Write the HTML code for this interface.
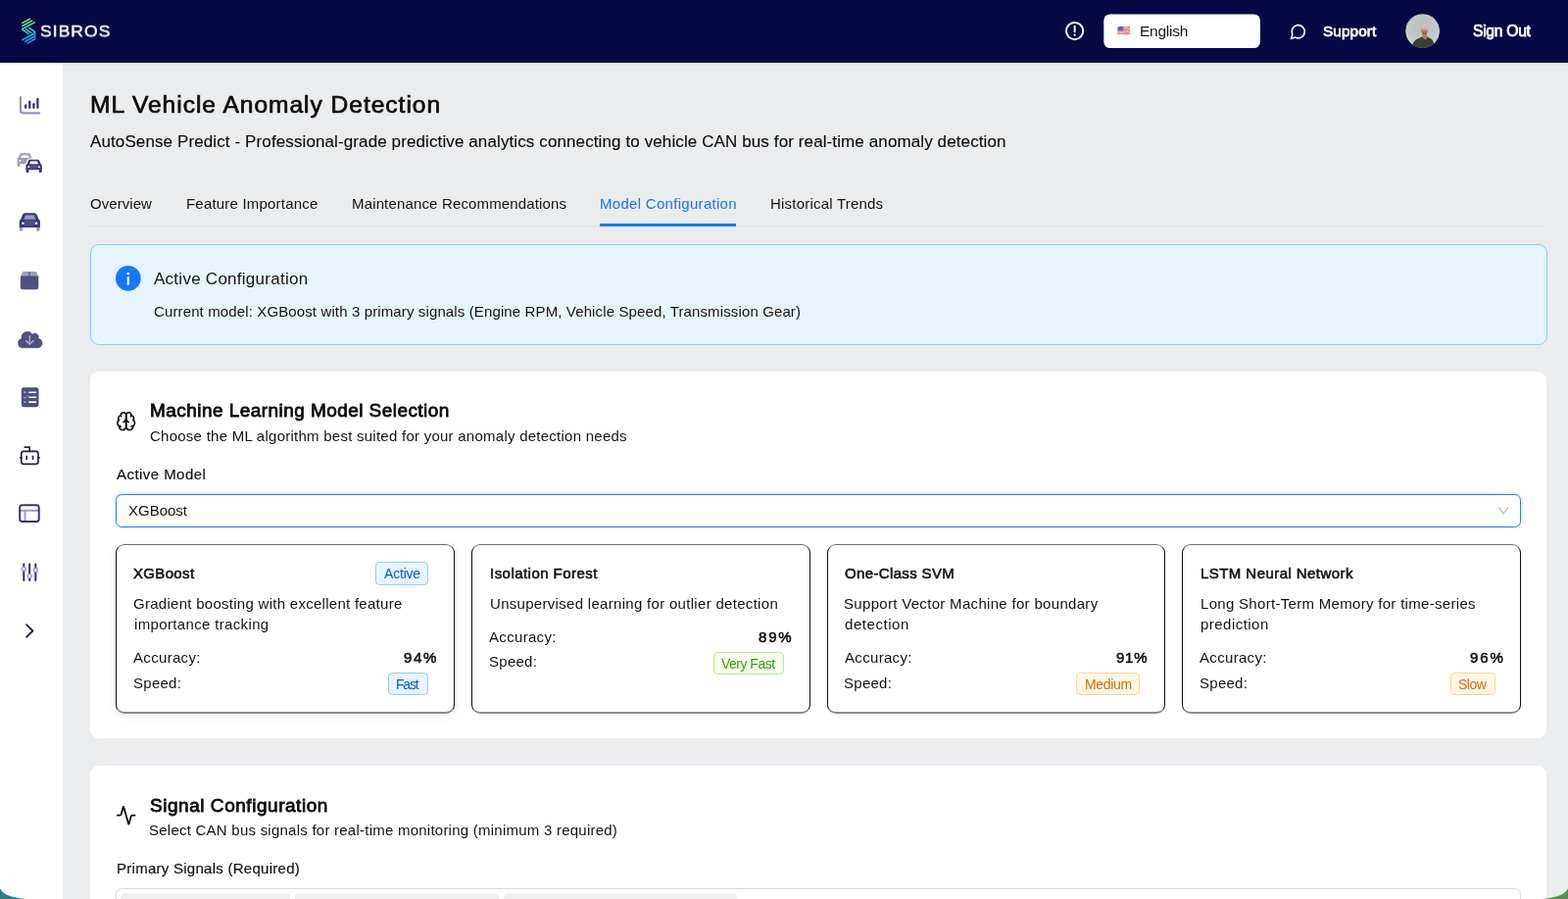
<!DOCTYPE html>
<html lang="en">
<head>
<meta charset="utf-8">
<title>ML Vehicle Anomaly Detection</title>
<style>
*{box-sizing:border-box;margin:0;padding:0}
html,body{width:1600px;height:917px;overflow:hidden;background:#ebecee;font-family:"Liberation Sans",sans-serif;color:#141414}
.abs{position:absolute}
.t{will-change:transform;position:absolute;white-space:nowrap;line-height:1;font-weight:400;margin:0}
#hdr{position:absolute;left:0;top:0;width:1600px;height:64px;background:#060944}
#side{position:absolute;left:0;top:64px;width:64px;height:853px;background:#fff}
#side svg{position:absolute;overflow:visible}
.card{position:absolute;left:92px;width:1486px;background:#fff;border-radius:9px}
.mc{position:absolute;top:555px;width:346px;height:173px;border-style:solid;border-width:1px 1px 2px 1px;border-color:#6e6e6e #0d0d0d #8c8c8c #0d0d0d;border-radius:9px;background:#fff}
.tag{position:absolute;border-radius:4.3px;border:1px solid}
.tag.blue{background:#e6f4ff;border-color:#91caff}
.tag.green{background:#f6ffed;border-color:#b7eb8f}
.tag.orange{background:#fff7e6;border-color:#ffd591}
.chip{position:absolute;top:911.25px;height:10px;background:#efefef;border-radius:4.3px 4.3px 0 0}
</style>
</head>
<body>
<div id="hdr">
<svg class="abs" style="left:0;top:0" width="1600" height="64" viewBox="0 0 1600 64" fill="none">
  <defs>
    <linearGradient id="lg" gradientUnits="userSpaceOnUse" x1="0" y1="19" x2="0" y2="45">
      <stop offset="0" stop-color="#86e24e"/><stop offset="0.28" stop-color="#4ddc9a"/><stop offset="0.5" stop-color="#27d3d6"/><stop offset="0.75" stop-color="#1fa9e4"/><stop offset="1" stop-color="#1b82f2"/>
    </linearGradient>
    <radialGradient id="avbg" cx="0.5" cy="0.35" r="0.75"><stop offset="0" stop-color="#b9bdbe"/><stop offset="0.6" stop-color="#c6c9cb"/><stop offset="1" stop-color="#e2e4e6"/></radialGradient>
    <linearGradient id="skin" x1="0" y1="0" x2="0" y2="1"><stop offset="0" stop-color="#d9cdc7"/><stop offset="0.45" stop-color="#cdb3a6"/><stop offset="0.8" stop-color="#94735f"/><stop offset="1" stop-color="#6b4a3a"/></linearGradient>
    <clipPath id="avc"><circle cx="1451.6" cy="31.6" r="17.4"/></clipPath>
    <filter id="bl" x="-10%" y="-10%" width="120%" height="120%"><feGaussianBlur stdDeviation="0.7"/></filter>
  </defs>
  <!-- logo -->
  <g stroke="url(#lg)" stroke-width="1.6" stroke-linecap="butt">
    <path d="M22.3 23.8 L30.8 19.2"/><path d="M22.3 26.8 L33.2 21"/><path d="M22.3 29.8 L35.8 22.6"/>
    <path d="M22.3 29.8 L29.7 34.9"/><path d="M26 29.6 L32.3 33.8"/><path d="M29.2 28.2 L35.8 32.6"/>
    <path d="M22.3 41 L35.8 33.8"/><path d="M25.1 42.7 L35.8 36.8"/><path d="M27.5 44.4 L35.8 39.7"/>
    <path d="M35.8 32.6 V39.7" stroke-width="1"/>
  </g>
  <!-- language select -->
  <rect x="1126.3" y="14.4" width="159.6" height="34.7" rx="6.4" fill="#fff"/>
  <!-- flag -->
  <g transform="translate(1140.4 26.6)">
    <path d="M0 1.2 Q3.2 -0.6 6.4 0.6 T12.7 0.2 V8.6 Q9.5 10 6.4 8.9 T0 9.4 Z" fill="#f4f0f0"/>
    <g stroke="#d8514f" stroke-width="0.75" fill="none">
      <path d="M5.6 0.9 Q8.6 1.8 12.7 0.7"/><path d="M5.6 2.3 Q8.6 3.2 12.7 2.1"/><path d="M5.6 3.7 Q8.6 4.6 12.7 3.5"/>
      <path d="M0 5.6 Q3.2 4.2 6.4 5.1 T12.7 4.9"/><path d="M0 7 Q3.2 5.6 6.4 6.5 T12.7 6.3"/><path d="M0 8.5 Q3.2 7.1 6.4 8 T12.7 7.8"/>
    </g>
    <path d="M0 1.2 Q3 -0.4 5.8 0.4 V4.6 Q3 3.8 0 5.2 Z" fill="#4a6fb5"/>
  </g>
  <!-- avatar -->
  <g clip-path="url(#avc)">
    <circle cx="1451.6" cy="31.6" r="17.6" fill="url(#avbg)"/>
    <g filter="url(#bl)">
      <path d="M1440.8 50 Q1441 42 1445.8 40 L1451 37.4 H1456.4 L1460.2 39.6 Q1463.8 41.8 1463.4 50 Z" fill="#3a3f2f"/>
      <path d="M1451.3 32.5 L1456 32.5 L1456.3 38.6 L1454.7 40.8 L1451.4 38.2 Z" fill="#a98371"/>
      <ellipse cx="1453.5" cy="29.6" rx="3.8" ry="5.5" fill="url(#skin)"/>
    </g>
  </g>
  </g>
  <!-- alert circle -->
  <circle cx="1096.6" cy="31.6" r="8.6" stroke="#fff" stroke-width="1.95"/>
  <path d="M1096.6 26.6 V32.4" stroke="#fff" stroke-width="1.9" stroke-linecap="round"/>
  <circle cx="1096.6" cy="35.7" r="1.1" fill="#fff"/>
  <!-- chat -->
  <g transform="translate(1315.9 23.5) scale(0.73)" stroke="#fff" stroke-width="2.2" stroke-linecap="round" stroke-linejoin="round"><path d="M7.9 20A9 9 0 1 0 4 16.1L2 22Z"/></g>
</svg>

</div>
<div id="side">
<svg class="abs" style="left:0;top:-64px" width="64" height="917" viewBox="0 0 64 917" fill="none">
  <!-- 1 chart -->
  <path d="M20.95 99 V112.6 Q20.95 115.4 23.8 115.4 H40.2" stroke="#9496b6" stroke-width="2.1" stroke-linecap="round" fill="none"/>
  <g stroke="#31326f" stroke-width="2.3" stroke-linecap="round">
    <path d="M26.2 107.5V109.8"/><path d="M30.3 103.7V109.8"/><path d="M34.4 106.2V109.8"/><path d="M38.4 100.8V109.8"/>
  </g>
  <!-- 2 cars -->
  <g transform="translate(17.6 156.2) scale(0.745)">
    <path d="M5.6 0 H15.6 Q17.2 0 17.8 1.5 L19.6 6.2 Q21.2 6.8 21.2 8.8 V14.8 H0 V8.8 Q0 6.8 1.6 6.2 L3.4 1.5 Q4 0 5.6 0 Z" fill="#9c9dbb"/>
    <rect x="0.3" y="13" width="3.6" height="5.5" rx="1.2" fill="#9c9dbb"/>
    <path d="M6.3 2.6 H14.9 L16.3 6.4 H4.9 Z" fill="#fff"/>
    <circle cx="3.8" cy="10.6" r="1.35" fill="#fff"/>
  </g>
  <g transform="translate(26.4 162.7) scale(0.775 0.72)">
    <path d="M5.6 0 H15.6 Q17.2 0 17.8 1.5 L19.6 6.2 Q21.2 6.8 21.2 8.8 V14.8 H0 V8.8 Q0 6.8 1.6 6.2 L3.4 1.5 Q4 0 5.6 0 Z" fill="#fff" stroke="#fff" stroke-width="3.4"/>
    <rect x="0.3" y="13" width="3.6" height="5.5" rx="1.2" fill="#fff" stroke="#fff" stroke-width="3"/>
    <path d="M5.6 0 H15.6 Q17.2 0 17.8 1.5 L19.6 6.2 Q21.2 6.8 21.2 8.8 V14.8 H0 V8.8 Q0 6.8 1.6 6.2 L3.4 1.5 Q4 0 5.6 0 Z" fill="#383972"/>
    <rect x="5.6" y="7.6" width="10" height="5.4" fill="#4f5080"/>
    <rect x="0.3" y="13" width="3.6" height="5.5" rx="1.2" fill="#383972"/>
    <rect x="17.3" y="13" width="3.6" height="5.5" rx="1.2" fill="#383972"/>
    <path d="M6.3 2.6 H14.9 L16.3 6.4 H4.9 Z" fill="#fff"/>
    <circle cx="3.8" cy="10.6" r="1.35" fill="#fff"/><circle cx="17.4" cy="10.6" r="1.35" fill="#fff"/>
  </g>
  <!-- 3 car -->
  <g transform="translate(19.7 217.2)">
    <rect x="0.3" y="13" width="3.4" height="5.5" rx="1.2" fill="#9c9dbb"/>
    <rect x="17.5" y="13" width="3.4" height="5.5" rx="1.2" fill="#9c9dbb"/>
    <path d="M5.6 0 H15.6 Q17.2 0 17.8 1.5 L19.6 6.2 Q21.2 6.8 21.2 8.8 V14.8 H0 V8.8 Q0 6.8 1.6 6.2 L3.4 1.5 Q4 0 5.6 0 Z" fill="#383972"/>
    <rect x="5.4" y="7.4" width="10.4" height="6" fill="#4f5080"/>
    <path d="M6.1 2.3 H15.1 L16.7 6.6 H4.5 Z" fill="#9c9dbb"/>
    <circle cx="3.8" cy="10.6" r="1.3" fill="#fff"/><circle cx="17.3" cy="10.6" r="1.3" fill="#fff"/>
  </g>
  <!-- 4 box -->
  <path d="M23.9 277 H36.3 Q37 277 37.3 277.7 L39 281.9 H21.1 L22.9 277.7 Q23.2 277 23.9 277 Z" fill="#9c9dbb"/>
  <rect x="29.1" y="277" width="1.8" height="5" fill="#6b6c97"/>
  <path d="M21.1 281.9 H39 V293 Q39 295.1 36.9 295.1 H23.2 Q21.1 295.1 21.1 293 Z" fill="#4f5080" stroke="#383972" stroke-width="0.5"/>
  <!-- 5 cloud -->
  <g fill="#4f5080" stroke="#383972" stroke-width="0.5">
    <path d="M22.8 354.7 A4.6 4.6 0 0 1 22.2 345.6 A5.9 5.9 0 0 1 33 341.2 A3.6 3.6 0 0 1 38.9 345.2 A4.7 4.7 0 0 1 37.8 354.7 Z"/>
  </g>
  <path d="M30.3 342.7 V351 M26.6 347.5 L30.3 351.2 L34 347.5" stroke="#a9aac6" stroke-width="1.5" stroke-linecap="round" stroke-linejoin="round" fill="none"/>
  <!-- 6 list -->
  <rect x="22.1" y="395.4" width="17.1" height="19.5" rx="2.2" fill="#4f5080" stroke="#383972" stroke-width="0.5"/>
  <g fill="#fff"><rect x="29.3" y="399.4" width="7.8" height="1.6" rx="0.3"/><rect x="29.3" y="404.4" width="7.8" height="1.6" rx="0.3"/><rect x="29.3" y="409.3" width="7.8" height="1.6" rx="0.3"/></g>
  <circle cx="25.5" cy="400.2" r="1.15" fill="#a9aac6"/><circle cx="25.5" cy="410.1" r="1.15" fill="#a9aac6"/>
  <path d="M24.2 405.2 L25.4 406.4 L27.6 403.7" stroke="#b9bad2" stroke-width="1" fill="none" stroke-linecap="round" stroke-linejoin="round"/>
  <!-- 7 robot -->
  <g transform="translate(18.9 449.9) scale(0.956)" stroke="#1f2733" stroke-width="1.75" stroke-linecap="round" stroke-linejoin="round" fill="none">
    <path d="M11.8 11V6.6H6.7"/><rect width="18" height="13.5" x="3" y="11" rx="2.4"/><path d="M2 17.7h1"/><path d="M21 17.7h1.2"/><path d="M15.3 16.2v3"/><path d="M8.7 16.2v3"/>
  </g>
  <!-- 8 layout -->
  <path d="M20.2 520.7 H39.7 M25.5 520.7 V531.9" stroke="#9c9dbb" stroke-width="2"/>
  <rect x="20.2" y="515.2" width="19.5" height="16.7" rx="2.4" stroke="#37386f" stroke-width="2" fill="none"/>
  <!-- 9 sliders -->
  <g stroke="#2d2e6e" stroke-width="2" stroke-linecap="round"><path d="M24.3 575.6V591.9"/><path d="M30.2 575.6V591.9"/><path d="M36.3 575.6V591.9"/></g>
  <g fill="#fff" stroke="#9496b6" stroke-width="1.3"><circle cx="24.3" cy="580.3" r="2"/><circle cx="30.2" cy="587.6" r="2"/><circle cx="36.3" cy="581.5" r="2"/></g>
  <!-- 10 chevron -->
  <path d="M27 637.1 L33.4 643.5 L27 649.9" stroke="#1f2733" stroke-width="1.8" stroke-linecap="round" stroke-linejoin="round" fill="none"/>
</svg>

</div>
<!-- tabs underline -->
<div class="abs" style="left:92px;top:230px;width:1486px;height:1px;background:rgba(5,5,5,0.035)"></div>
<div class="abs" style="left:612.4px;top:228.4px;width:139px;height:2.6px;background:#1677ff"></div>
<!-- alert -->
<div class="abs" style="left:91.5px;top:249px;width:1487px;height:102.5px;background:#e6f4ff;border:1px solid #91caff;border-radius:9px"></div>
<svg class="abs" style="left:118px;top:271px" width="26" height="26" viewBox="0 0 26 26"><circle cx="12.8" cy="12.9" r="12.8" fill="#1677ff"/><rect x="11.7" y="11.3" width="2.2" height="8.4" rx="0.3" fill="#fff"/><circle cx="12.8" cy="8.1" r="1.45" fill="#fff"/></svg>
<!-- card 1 -->
<div class="card" style="top:379px;height:374px"></div>
<svg class="abs" style="left:117.9px;top:418.7px" width="21.33" height="21.33" viewBox="0 0 24 24" fill="none" stroke="#0c0c0c" stroke-width="1.85" stroke-linecap="round" stroke-linejoin="round"><path d="M12 5a3 3 0 1 0-5.997.125 4 4 0 0 0-2.526 5.77 4 4 0 0 0 .556 6.588A4 4 0 1 0 12 18Z"/><path d="M12 5a3 3 0 1 1 5.997.125 4 4 0 0 1 2.526 5.77 4 4 0 0 1-.556 6.588A4 4 0 1 1 12 18Z"/><path d="M15 13a4.5 4.5 0 0 1-3-4 4.5 4.5 0 0 1-3 4"/><path d="M17.599 6.5a3 3 0 0 0 .399-1.375"/><path d="M6.003 5.125A3 3 0 0 0 6.401 6.5"/><path d="M3.477 10.896a4 4 0 0 1 .585-.396"/><path d="M19.938 10.5a4 4 0 0 1 .585.396"/><path d="M6 18a4 4 0 0 1-1.967-.516"/><path d="M19.967 17.484A4 4 0 0 1 18 18"/></svg>

<div class="abs" style="left:118px;top:504.25px;width:1434px;height:33.5px;border:1px solid #1b80ff;border-radius:6.4px;background:#fff;box-shadow:0 0 0 2px rgba(5,145,255,0.1)"></div>
<svg class="abs" style="left:1527px;top:515px" width="13" height="13" viewBox="0 0 13 13"><path d="M2.3 2.7 L7.1 8.9 L11.9 2.7" fill="none" stroke="#b3b3b3" stroke-width="1.1"/></svg>
<div class="mc" style="left:118px;box-shadow:0 2px 8px rgba(0,0,0,0.09)"></div>
<div class="mc" style="left:481px"></div>
<div class="mc" style="left:844px;width:345px"></div>
<div class="mc" style="left:1206px"></div>
<div class="tag blue" style="left:383px;top:573px;width:54.4px;height:23.7px"></div>
<div class="tag blue" style="left:395.5px;top:686px;width:41.9px;height:23.3px"></div>
<div class="tag green" style="left:727.5px;top:664.8px;width:72.9px;height:23.3px"></div>
<div class="tag orange" style="left:1098px;top:686px;width:64.9px;height:23.3px"></div>
<div class="tag orange" style="left:1479.9px;top:686px;width:46px;height:23.3px"></div>
<!-- card 2 -->
<div class="card" style="top:780.6px;height:160px"></div>
<svg class="abs" style="left:118.1px;top:820.95px" width="21.33" height="21.33" viewBox="0 0 24 24" fill="none" stroke="#0c0c0c" stroke-width="2" stroke-linecap="round" stroke-linejoin="round"><path d="M22 12h-2.48a2 2 0 0 0-1.93 1.46l-2.35 8.36a.25.25 0 0 1-.48 0L9.24 2.18a.25.25 0 0 0-.48 0l-2.35 8.36A2 2 0 0 1 4.49 12H2"/></svg>

<div class="abs" style="left:118px;top:906.25px;width:1434px;height:40px;border:1px solid #d9d9d9;border-radius:6.4px;background:#fff"></div>
<div class="chip" style="left:123px;width:172.5px"></div>
<div class="chip" style="left:301px;width:208px"></div>
<div class="chip" style="left:514px;width:237.5px"></div>
<header>
<div class="t" style="left:41px;top:25px;font-size:16px;letter-spacing:0.872px;color:#fff;-webkit-text-stroke:0.4px currentColor;transform:scale(1.1,0.95);transform-origin:0 0">SIBROS</div>
<div class="t" style="left:1163px;top:24px;font-size:15.5px;letter-spacing:-0.257px">English</div>
<div class="t" style="left:1350px;top:24px;font-size:15.3px;letter-spacing:0.126px;color:#fff;-webkit-text-stroke:0.75px currentColor">Support</div>
<div class="t" style="left:1503px;top:24px;font-size:15.6px;letter-spacing:-0.257px;color:#fff;-webkit-text-stroke:0.75px currentColor">Sign Out</div>
</header>
<main>
<h1 class="t" style="left:92px;top:95px;font-size:24.6px;letter-spacing:0.957px;color:#0c0c0c;-webkit-text-stroke:0.7px currentColor">ML Vehicle Anomaly Detection</h1>
<p class="t" style="left:92px;top:136px;font-size:17px;letter-spacing:0.110px;color:#0c0c0c;-webkit-text-stroke:0.12px currentColor">AutoSense Predict - Professional-grade predictive analytics connecting to vehicle CAN bus for real-time anomaly detection</p>
<nav>
<div class="t" style="left:92px;top:200px;font-size:15px;letter-spacing:0.062px">Overview</div>
<div class="t" style="left:190px;top:200px;font-size:15px;letter-spacing:0.199px">Feature Importance</div>
<div class="t" style="left:359px;top:200px;font-size:15px;letter-spacing:0.153px">Maintenance Recommendations</div>
<div class="t" style="left:612px;top:200px;font-size:15px;letter-spacing:0.297px;color:#1677ff">Model Configuration</div>
<div class="t" style="left:786px;top:200px;font-size:15px;letter-spacing:0.210px">Historical Trends</div>
</nav>
<section>
<div class="t" style="left:157px;top:276px;font-size:17px;letter-spacing:0.262px">Active Configuration</div>
<div class="t" style="left:157px;top:310px;font-size:15px;letter-spacing:0.125px">Current model: XGBoost with 3 primary signals (Engine RPM, Vehicle Speed, Transmission Gear)</div>
<h2 class="t" style="left:153px;top:409px;font-size:19px;letter-spacing:0.445px;color:#0c0c0c;-webkit-text-stroke:0.8px currentColor">Machine Learning Model Selection</h2>
<div class="t" style="left:153px;top:437px;font-size:15px;letter-spacing:0.252px">Choose the ML algorithm best suited for your anomaly detection needs</div>
<div class="t" style="left:119px;top:476px;font-size:15px;letter-spacing:0.450px;-webkit-text-stroke:0.2px currentColor">Active Model</div>
<div class="t" style="left:131px;top:513px;font-size:15px;letter-spacing:-0.005px">XGBoost</div>
<div class="t" style="left:136px;top:577px;font-size:15px;letter-spacing:0.336px;-webkit-text-stroke:0.6px currentColor">XGBoost</div>
<div class="t" style="left:392px;top:578px;font-size:14px;letter-spacing:-0.198px;color:#0958d9">Active</div>
<div class="t" style="left:136px;top:608px;font-size:15px;letter-spacing:0.276px">Gradient boosting with excellent feature</div>
<div class="t" style="left:137px;top:629px;font-size:15px;letter-spacing:0.350px">importance tracking</div>
<div class="t" style="left:136px;top:663px;font-size:15px;letter-spacing:0.320px">Accuracy:</div>
<div class="t" style="left:412px;top:663px;font-size:15px;letter-spacing:1.648px;-webkit-text-stroke:0.6px currentColor">94%</div>
<div class="t" style="left:136px;top:689px;font-size:15px;letter-spacing:0.273px">Speed:</div>
<div class="t" style="left:404px;top:691px;font-size:14px;letter-spacing:-1.208px;color:#0958d9">Fast</div>
<div class="t" style="left:500px;top:577px;font-size:15px;letter-spacing:0.458px;-webkit-text-stroke:0.6px currentColor">Isolation Forest</div>
<div class="t" style="left:500px;top:608px;font-size:15px;letter-spacing:0.303px">Unsupervised learning for outlier detection</div>
<div class="t" style="left:499px;top:642px;font-size:15px;letter-spacing:0.320px">Accuracy:</div>
<div class="t" style="left:774px;top:642px;font-size:15px;letter-spacing:1.831px;-webkit-text-stroke:0.6px currentColor">89%</div>
<div class="t" style="left:499px;top:667px;font-size:15px;letter-spacing:0.273px">Speed:</div>
<div class="t" style="left:736px;top:670px;font-size:14px;letter-spacing:-0.507px;color:#389e0d">Very Fast</div>
<div class="t" style="left:862px;top:577px;font-size:15px;letter-spacing:0.353px;-webkit-text-stroke:0.6px currentColor">One-Class SVM</div>
<div class="t" style="left:861px;top:608px;font-size:15px;letter-spacing:0.314px">Support Vector Machine for boundary</div>
<div class="t" style="left:862px;top:629px;font-size:15px;letter-spacing:0.560px">detection</div>
<div class="t" style="left:862px;top:663px;font-size:15px;letter-spacing:0.320px">Accuracy:</div>
<div class="t" style="left:1139px;top:663px;font-size:15px;letter-spacing:0.776px;-webkit-text-stroke:0.6px currentColor">91%</div>
<div class="t" style="left:861px;top:689px;font-size:15px;letter-spacing:0.273px">Speed:</div>
<div class="t" style="left:1107px;top:691px;font-size:14px;letter-spacing:-0.346px;color:#d46b08">Medium</div>
<div class="t" style="left:1225px;top:577px;font-size:15px;letter-spacing:0.439px;-webkit-text-stroke:0.6px currentColor">LSTM Neural Network</div>
<div class="t" style="left:1225px;top:608px;font-size:15px;letter-spacing:0.305px">Long Short-Term Memory for time-series</div>
<div class="t" style="left:1225px;top:629px;font-size:15px;letter-spacing:0.470px">prediction</div>
<div class="t" style="left:1224px;top:663px;font-size:15px;letter-spacing:0.320px">Accuracy:</div>
<div class="t" style="left:1500px;top:663px;font-size:15px;letter-spacing:1.862px;-webkit-text-stroke:0.6px currentColor">96%</div>
<div class="t" style="left:1224px;top:689px;font-size:15px;letter-spacing:0.273px">Speed:</div>
<div class="t" style="left:1488px;top:691px;font-size:14px;letter-spacing:-0.523px;color:#d46b08">Slow</div>
<h2 class="t" style="left:153px;top:812px;font-size:19px;letter-spacing:0.539px;color:#0c0c0c;-webkit-text-stroke:0.8px currentColor">Signal Configuration</h2>
<div class="t" style="left:152px;top:839px;font-size:15px;letter-spacing:0.239px">Select CAN bus signals for real-time monitoring (minimum 3 required)</div>
<div class="t" style="left:119px;top:878px;font-size:15px;letter-spacing:0.267px;-webkit-text-stroke:0.2px currentColor">Primary Signals (Required)</div>
</section>
</main>
<svg class="abs" style="left:0;top:905px" width="1600" height="12" viewBox="0 905 1600 12"><path d="M0 906 Q3 915 27 917 H0 Z" fill="#2f7f84"/><path d="M1600 906 Q1597 915 1573 917 H1600 Z" fill="#5d8a58"/></svg>


</body>
</html>
